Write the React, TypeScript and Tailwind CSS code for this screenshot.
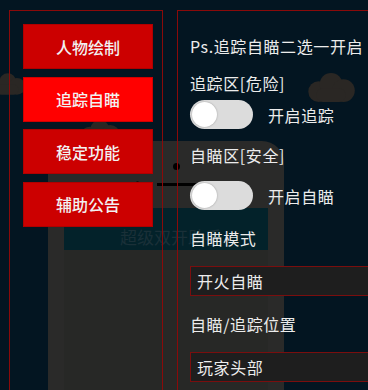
import React from "react";

const menu = [
  { label: "人物绘制", active: false },
  { label: "追踪自瞄", active: true },
  { label: "稳定功能", active: false },
  { label: "辅助公告", active: false },
];

function Cloud({ className }: { className: string }) {
  return (
    <svg className={className} viewBox="0 0 50 30" fill="#2a2724">
      <circle cx="14" cy="19" r="10" />
      <circle cx="26" cy="12" r="11" />
      <circle cx="38" cy="18" r="11" />
      <rect x="12" y="16" width="28" height="13" rx="6" />
    </svg>
  );
}

function Toggle({ label }: { label: string }) {
  return (
    <div className="flex items-center">
      <div className="w-[63px] h-[29px] rounded-full bg-[#dcdcdc] flex items-center px-[2px]">
        <div className="w-[25px] h-[25px] rounded-full bg-white shadow-[0_0_2px_rgba(0,0,0,0.3)]" />
      </div>
      <span className="ml-[15px] text-[16px] leading-[24px] text-[#ececec]">{label}</span>
    </div>
  );
}

function Select({ value }: { value: string }) {
  return (
    <div className="h-[30px] w-[200px] border border-[#7a0e0e] bg-[#1e1e1e] flex items-center pl-[6px] text-[16px] text-[#ececec]">
      {value}
    </div>
  );
}

export default function App() {
  return (
    <div
      className="relative w-[368px] h-[390px] overflow-hidden bg-[#031521]"
      style={{ fontFamily: '"Noto Sans CJK SC", "Noto Sans", sans-serif' }}
    >
      {/* background picture */}
      <div className="absolute inset-0">
        <Cloud className="absolute left-[-12px] top-[72px] w-[38px] h-[24px]" />
        <Cloud className="absolute left-[304px] top-[72px] w-[52px] h-[31px]" />
        <Cloud className="absolute left-[76px] top-[119px] w-[46px] h-[26px]" />
        <div className="absolute left-[48px] top-[141px] w-[236px] h-[300px] rounded-[22px] bg-[#2a2a29]">
          <div className="absolute left-[16px] top-[67px] w-[204px] h-[42px] bg-[#03222a]" />
          <div className="absolute left-[16px] top-[109px] w-[204px] h-[200px] bg-[#272826]" />
          <div className="absolute left-[125px] top-[22px] w-[7px] h-[7px] rounded-full bg-black" />
          <div className="absolute left-[109px] top-[42px] w-[44px] h-[3px] bg-black" />
          <div className="absolute left-[88px] top-[40px] w-[3px] h-[3px] rounded-full bg-[#111]" />
          <div className="absolute left-[72px] top-[84px] text-[17px] leading-[24px] text-[#1a3038] whitespace-nowrap">
            超级双开助手
          </div>
        </div>
      </div>

      <div className="relative flex pt-[10px] pl-[9px]">
        <div className="w-[154px] h-[400px] border border-[#8a0a0a] px-[13px] pt-[13px] flex flex-col gap-[7.5px]">
          {menu.map((m) => (
            <div
              key={m.label}
              className={`w-[130px] h-[45px] flex items-center justify-center border text-[16px] font-medium text-[#f2f2f2] ${
                m.active ? "bg-[#ff0000] border-[#d00000]" : "bg-[#cc0000] border-[#b00000]"
              }`}
            >
              {m.label}
            </div>
          ))}
        </div>

        <div className="ml-[14px] w-[220px] h-[400px] border border-[#8a0a0a] pl-[12px] pt-[23px] flex flex-col text-[16px] leading-[24px] tracking-[0.6px] text-[#ececec]">
          <div className="whitespace-nowrap">Ps.追踪自瞄二选一开启</div>
          <div className="mt-[13px]">追踪区[危险]</div>
          <div className="mt-[5px]">
            <Toggle label="开启追踪" />
          </div>
          <div className="mt-[14px]">自瞄区[安全]</div>
          <div className="mt-[14px]">
            <Toggle label="开启自瞄" />
          </div>
          <div className="mt-[16px]">自瞄模式</div>
          <div className="mt-[16px]">
            <Select value="开火自瞄" />
          </div>
          <div className="mt-[16px]">自瞄/追踪位置</div>
          <div className="mt-[16px]">
            <Select value="玩家头部" />
          </div>
        </div>
      </div>
    </div>
  );
}
